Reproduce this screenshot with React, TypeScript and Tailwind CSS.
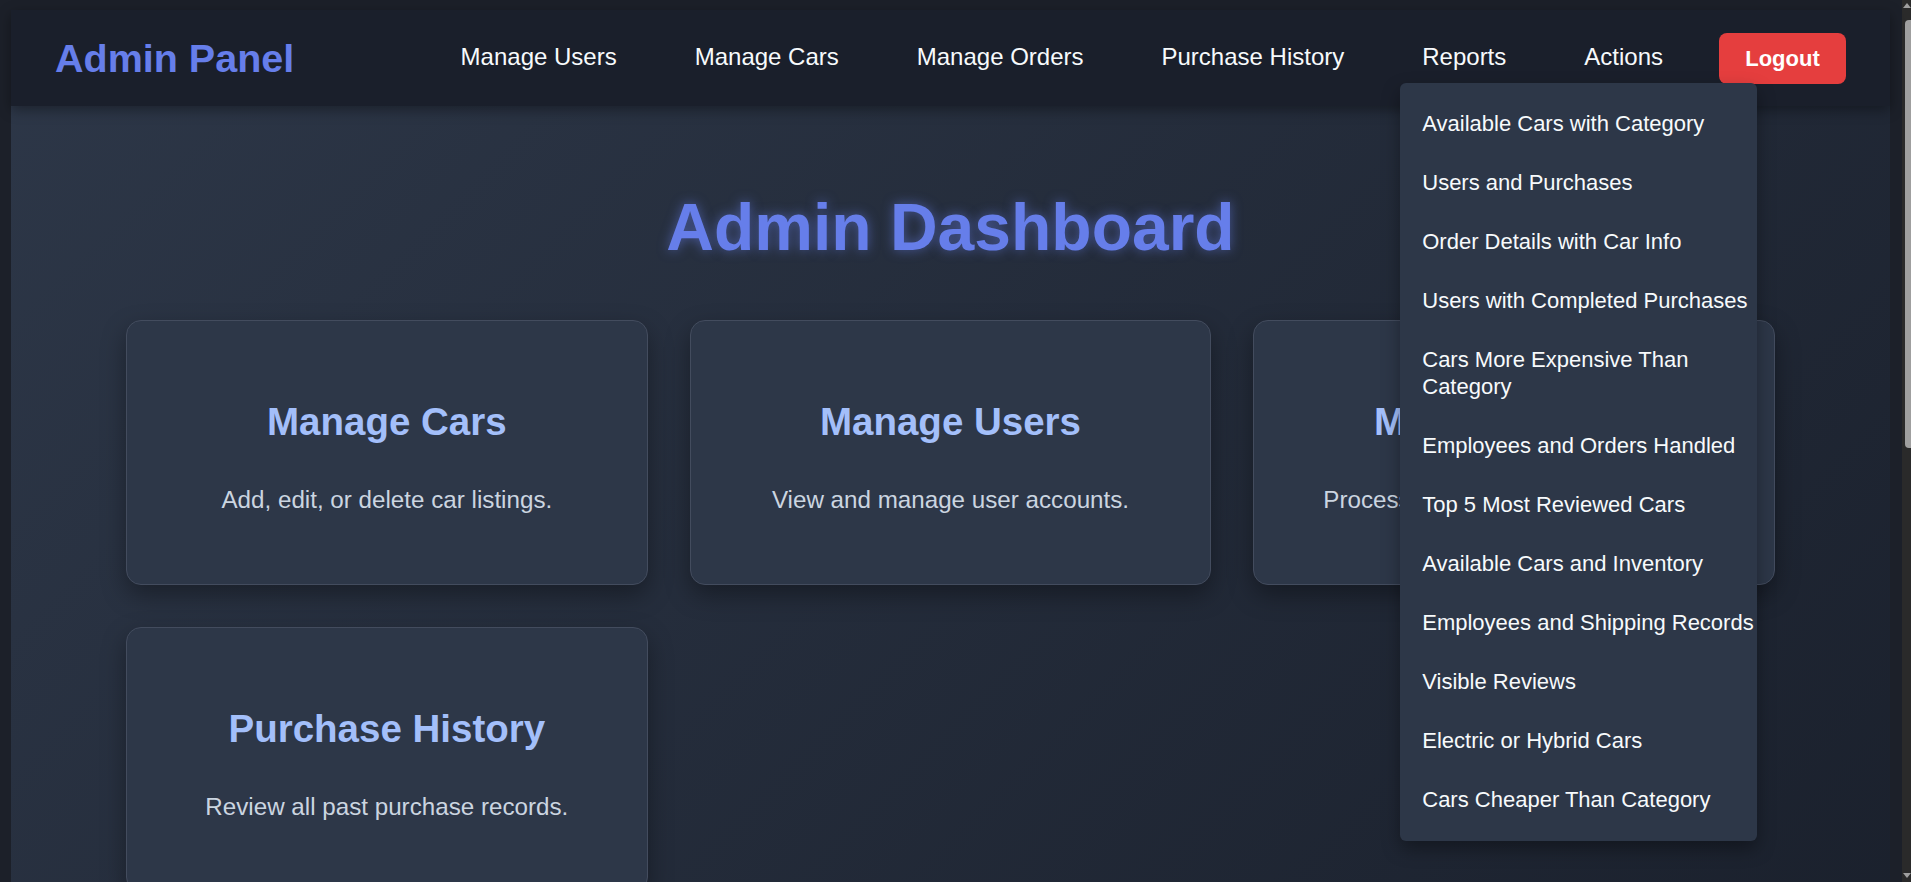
import React from "react";

const reports = [
  "Available Cars with Category",
  "Users and Purchases",
  "Order Details with Car Info",
  "Users with Completed Purchases",
  "Cars More Expensive Than Category",
  "Employees and Orders Handled",
  "Top 5 Most Reviewed Cars",
  "Available Cars and Inventory",
  "Employees and Shipping Records",
  "Visible Reviews",
  "Electric or Hybrid Cars",
  "Cars Cheaper Than Category",
];

const cards = [
  { title: "Manage Cars", desc: "Add, edit, or delete car listings." },
  { title: "Manage Users", desc: "View and manage user accounts." },
  { title: "Manage Orders", desc: "Process and track customer orders." },
  { title: "Purchase History", desc: "Review all past purchase records." },
];

export default function App() {
  return (
    <div className="flex h-[882px] w-[1911px] overflow-hidden bg-[#1c2029] font-['Liberation_Sans',Arial,sans-serif]">
      <div className="min-w-0 flex-1 pl-[11px] pr-[12px] pt-[10px]">
        <div className="min-h-[1000px] bg-[linear-gradient(135deg,#2d3748_0%,#1a202c_100%)]">
          <nav className="relative z-10 flex h-[96px] items-center justify-between bg-[#1a1f2b] px-[44px] shadow-[0_4px_12px_rgba(0,0,0,0.35)]">
            <div className="text-[39.5px] font-bold leading-[45px] text-[#667eea]">Admin Panel</div>
            <div className="flex items-center">
              <div className="flex items-center gap-[78px] pb-[2px] text-[24px] leading-[28px] text-[#f7fafc]">
                <div>Manage Users</div>
                <div>Manage Cars</div>
                <div>Manage Orders</div>
                <div>Purchase History</div>
                <div className="relative">
                  Reports
                  <div className="absolute left-[-22px] top-[40px] z-20 w-[357px] rounded-[6px] bg-[#2d3748] pb-[12px] pt-[11px] shadow-[0_8px_18px_rgba(0,0,0,0.35)]">
                    {reports.map((r) => (
                      <div
                        key={r}
                        className="box-content w-full px-[22px] py-[16px] text-[22px] leading-[27px] text-[#f7fafc]"
                      >
                        {r}
                      </div>
                    ))}
                  </div>
                </div>
                <div>Actions</div>
              </div>
              <div className="ml-[56px] flex h-[51px] w-[127px] items-center justify-center rounded-[8px] bg-[#e53e3e] text-[22px] font-bold text-white">
                Logout
              </div>
            </div>
          </nav>
          <main className="px-[115px] pb-[80px] pt-[83px]">
            <h1 className="mb-[55px] text-center text-[66px] font-bold leading-[76px] text-[#667eea] [text-shadow:0_0_12px_rgba(102,126,234,0.55)]">
              Admin Dashboard
            </h1>
            <div className="grid grid-cols-3 gap-[42px]">
              {cards.map((c) => (
                <div
                  key={c.title}
                  className="rounded-[15px] border border-[#434c5e] bg-[#2d3748] pb-[70px] pt-[79px] text-center shadow-[0_10px_25px_rgba(0,0,0,0.35)]"
                >
                  <div className="text-[38.5px] font-bold leading-[44px] text-[#a3bffa]">{c.title}</div>
                  <div className="mt-[42px] text-[24.2px] leading-[28px] text-[#cbd5e0]">{c.desc}</div>
                </div>
              ))}
            </div>
          </main>
        </div>
      </div>
      <div className="flex w-[9px] flex-col bg-[#2a2a2a]">
        <svg width="9" height="12" viewBox="0 0 9 12" className="shrink-0">
          <polygon points="5,3 9,8 1,8" fill="#9f9f9f" />
        </svg>
        <div className="ml-[3px] mt-[8px] h-[428px] rounded-l-[4px] bg-[#9f9f9f]" />
        <div className="flex-1" />
        <svg width="9" height="12" viewBox="0 0 9 12" className="shrink-0">
          <polygon points="1,3 9,3 5,8" fill="#9f9f9f" />
        </svg>
      </div>
    </div>
  );
}
